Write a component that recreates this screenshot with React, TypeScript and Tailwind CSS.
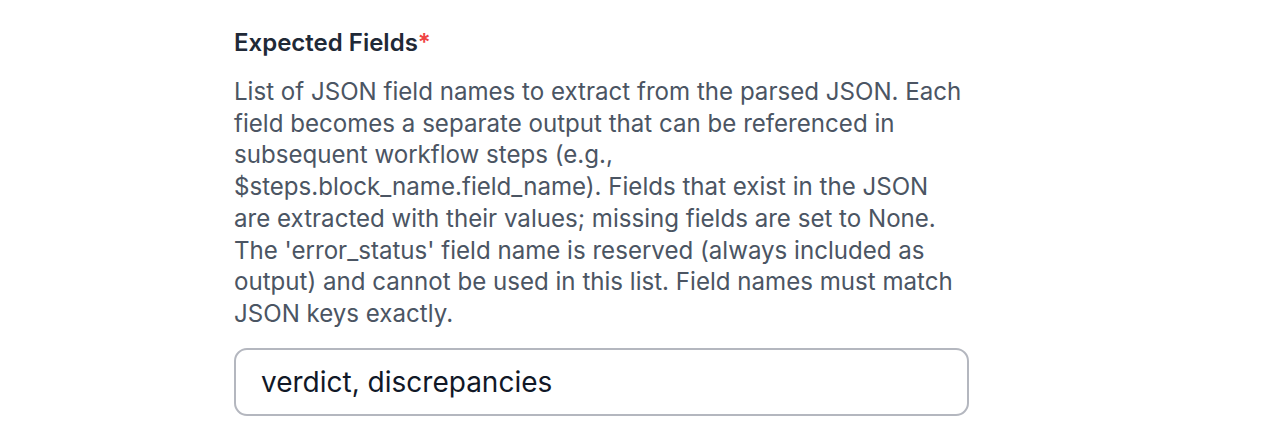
import React from "react";

export default function App() {
  return (
    <div className="w-[1288px] h-[440px] bg-white" style={{ fontFamily: "Inter, 'Noto Sans', sans-serif" }}>
      <div className="ml-[234px] w-[735px] pt-[27px] flex flex-col">
        <div className="text-[24px] leading-[32px] font-semibold text-[#1f2937]">
          Expected Fields<span className="text-[#ef4444]">*</span>
        </div>
        <p className="mt-[17px] text-[24.1px] leading-[31.7px] text-[#4b5563]">
          List of JSON field names to extract from the parsed JSON. Each field becomes a separate output that can be
          referenced in subsequent workflow steps (e.g., $steps.block_name.field_name). Fields that exist in the JSON
          are extracted with their values; missing fields are set to None. The 'error_status' field name is reserved
          (always included as output) and cannot be used in this list. Field names must match JSON keys exactly.
        </p>
        <div className="mt-[18px] w-[735px] h-[68px] rounded-[13px] border-[2px] border-[#b4b7bf] flex items-center px-[25px]">
          <span className="text-[28px] text-[#111827]">verdict, discrepancies</span>
        </div>
      </div>
    </div>
  );
}
